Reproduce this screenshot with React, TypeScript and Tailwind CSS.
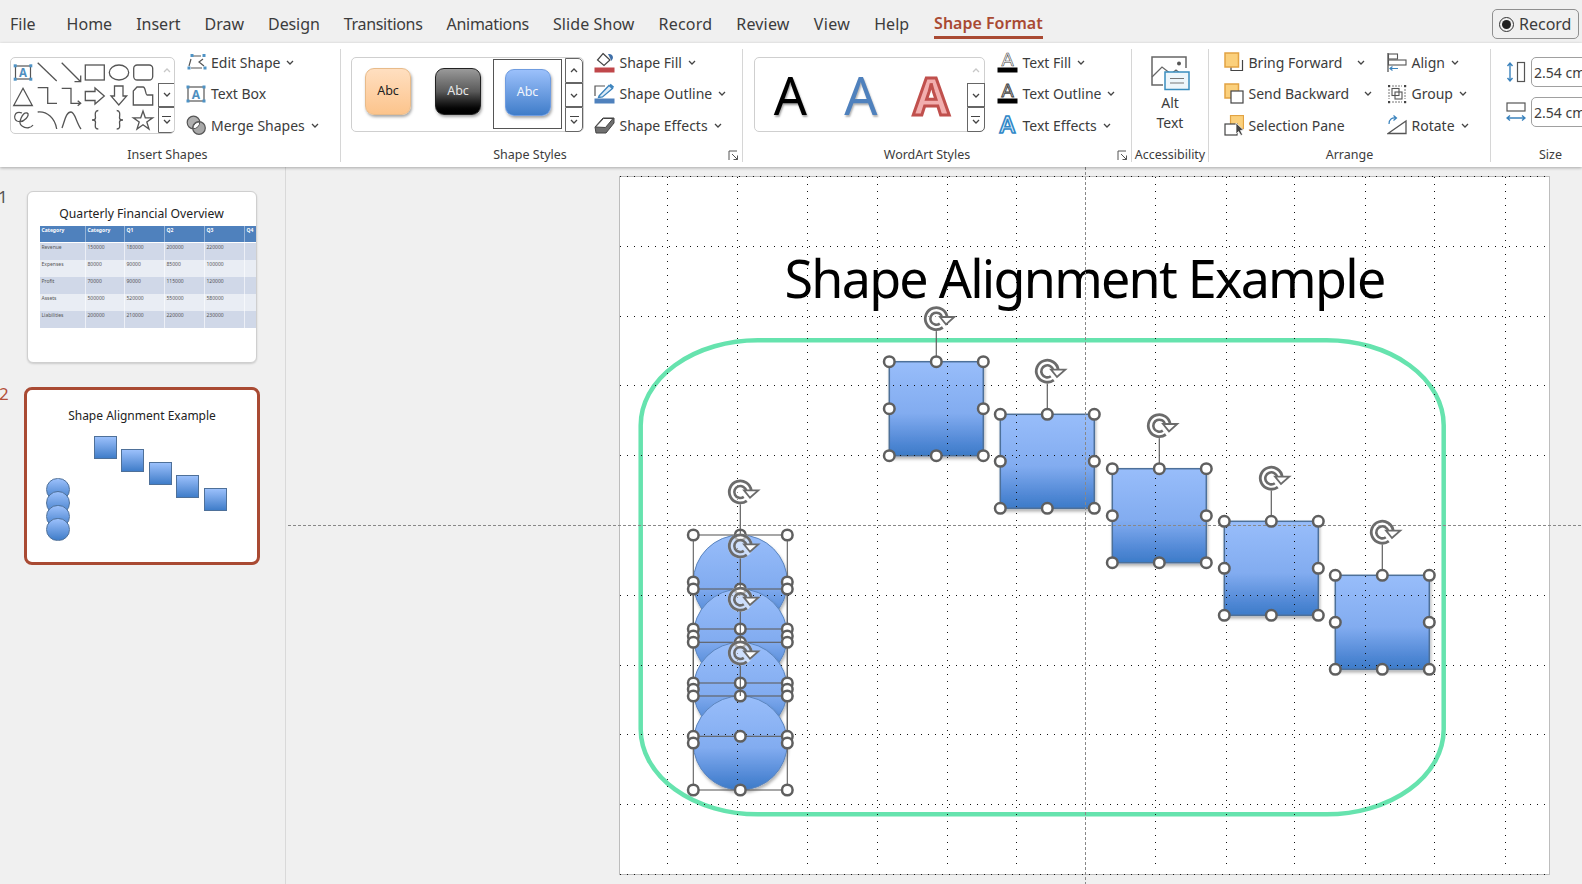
import React from "react";

const ink = "#555555";

function Chevron({ className = "" }: { className?: string }) {
  return (
    <svg width="8" height="5" viewBox="0 0 8 5" className={className} fill="none" stroke="#444" strokeWidth="1.3">
      <path d="M1 1 L4 4 L7 1" />
    </svg>
  );
}

function TextBoxIcon() {
  return (
    <svg width="20" height="18" viewBox="0 0 20 18" className="overflow-visible">
      <rect x="2" y="2" width="16" height="14" fill="#fff" stroke="#555" strokeWidth="1.2" />
      {[[0.5, 0.5], [16.5, 0.5], [0.5, 14.5], [16.5, 14.5]].map(([x, y], i) => (
        <rect key={i} x={x} y={y} width="3" height="3" fill="#4f93c5" />
      ))}
      <text x="10" y="13.5" textAnchor="middle" fontSize="12" fontWeight="700" fill="#4f8fc0" fontFamily="Noto Sans, sans-serif">A</text>
    </svg>
  );
}

function EditShapeIcon() {
  return (
    <svg width="21" height="18" viewBox="0 0 21 18" fill="none">
      <path d="M6 3 L15 3 M17 6 L13 9 L18 13 M16 15 L5 15 M3 13 L5 6" stroke="#555" strokeWidth="1.2" />
      {[[4.5, 1], [16.5, 1], [1.5, 13.5], [17.5, 13.5]].map(([x, y], i) => (
        <rect key={i} x={x} y={y} width="3" height="3" fill="#4f93c5" />
      ))}
    </svg>
  );
}

function MergeIcon() {
  return (
    <svg width="21" height="21" viewBox="0 0 21 21">
      <circle cx="7.5" cy="7.5" r="6.3" fill="#b0b0b0" stroke="#555" strokeWidth="1.2" />
      <circle cx="13" cy="13" r="6.3" fill="#a8a8a8" stroke="#555" strokeWidth="1.2" />
      <path d="M7 13.7 A6.3 6.3 0 0 1 13.7 7 A6.3 6.3 0 0 1 7 13.7" fill="#fff" stroke="#555" strokeWidth="1" />
    </svg>
  );
}

function FillIcon() {
  return (
    <svg width="21" height="21" viewBox="0 0 21 21" fill="none">
      <path d="M9 1.5 L16 8 L10 13.5 L3.5 8 Z" fill="#fff" stroke="#444" strokeWidth="1.2" />
      <path d="M14 2 C17 1.5 19 3 19 6 L17.5 9 L15.5 5 Z" fill="#3f6fa8" />
      <rect x="0.5" y="15.5" width="20" height="5" fill="#c0474a" />
    </svg>
  );
}

function OutlineIcon() {
  return (
    <svg width="21" height="21" viewBox="0 0 21 21" fill="none">
      <path d="M1 13 L1 3 L11 3" stroke="#555" strokeWidth="1.2" />
      <path d="M5 13 L15 2.5 L18.5 5.5 L8.5 14 L4.5 14.5 Z" fill="#dcebf7" stroke="#3b83bd" strokeWidth="1.3" />
      <path d="M16 1.5 L19.5 4.5" stroke="#3b83bd" strokeWidth="2" />
      <rect x="0.5" y="15.5" width="20" height="5" fill="#4f81bd" />
    </svg>
  );
}

function EffectsIcon() {
  return (
    <svg width="21" height="19" viewBox="0 0 21 19">
      <path d="M1 11 L9 2 L20 2 L20 7 L12 17 L2 17 Z" fill="#6f6f6f" stroke="#444" strokeWidth="1" />
      <path d="M1.5 11 L9.5 2.5 L19 2.5 L11.5 11.5 Z" fill="#fff" stroke="#444" strokeWidth="1" />
    </svg>
  );
}

function TextFillIcon({ mode }: { mode: "fill" | "outline" }) {
  return (
    <svg width="21" height="21" viewBox="0 0 21 21" className="overflow-visible">
      <text x="10.5" y="13.5" textAnchor="middle" fontSize="18" fontFamily="Lato, sans-serif" fill="#fff" stroke="#444" strokeWidth={mode === "fill" ? 0.6 : 1}>A</text>
      <rect x="0.5" y="15.5" width="20" height="5" fill="#000" />
    </svg>
  );
}

function TextEffectIcon() {
  return (
    <svg width="21" height="21" viewBox="0 0 21 21" className="overflow-visible">
      <text x="10.5" y="18" textAnchor="middle" fontSize="22" fontWeight="700" fontFamily="Lato, sans-serif" fill="#dff0fb" stroke="#2f87c7" strokeWidth="1.6">A</text>
    </svg>
  );
}

function BringIcon() {
  return (
    <svg width="20" height="21" viewBox="0 0 20 21" fill="none">
      <path d="M12 18.5 H18.5 V8" stroke="#444" strokeWidth="1.2" />
      <path d="M7 15 V18.5 H13" stroke="#444" strokeWidth="1.2" />
      <rect x="1" y="1" width="13.5" height="14" fill="#fbd07c" stroke="#e2a343" strokeWidth="1.5" />
    </svg>
  );
}

function SendIcon() {
  return (
    <svg width="20" height="21" viewBox="0 0 20 21">
      <rect x="1" y="1" width="13.5" height="14" fill="#fbd07c" stroke="#e2a343" strokeWidth="1.5" />
      <rect x="7" y="8" width="12" height="12" fill="#fff" stroke="#444" strokeWidth="1.2" />
    </svg>
  );
}

function PaneIcon() {
  return (
    <svg width="20" height="21" viewBox="0 0 20 21">
      <rect x="6.5" y="0.5" width="13" height="13" fill="#fbd07c" stroke="#e2a343" strokeWidth="1.2" />
      <rect x="1" y="9" width="12" height="11" fill="#fff" stroke="#444" strokeWidth="1.2" />
      <path d="M12 8 L12 19 L14.5 16.5 L17 20.5 L18.5 19.5 L16.5 15.5 L19.5 15 Z" fill="#444" stroke="#fff" strokeWidth="0.7" />
    </svg>
  );
}

function AlignIcon() {
  return (
    <svg width="20" height="21" viewBox="0 0 20 21" fill="none">
      <path d="M1 1 V20" stroke="#555" strokeWidth="1.3" />
      <rect x="1.5" y="2" width="9" height="5" fill="#fff" stroke="#555" strokeWidth="1.1" />
      <rect x="1.5" y="8" width="17.5" height="5" fill="#fff" stroke="#555" strokeWidth="1.1" />
      <path d="M2.5 16.5 H11 M5.5 14.5 L3 16.5 L5.5 18.5" stroke="#3b83bd" strokeWidth="1.2" />
    </svg>
  );
}

function GroupIcon() {
  return (
    <svg width="20" height="20" viewBox="0 0 20 20" fill="none">
      {[[1, 1], [17, 1], [1, 17], [17, 17]].map(([x, y], i) => (
        <rect key={i} x={x} y={y} width="2.2" height="2.2" fill="#444" />
      ))}
      <path d="M2 5 V15 M18 5 V15 M5 2 H15 M5 18 H15" stroke="#777" strokeWidth="1" strokeDasharray="2 1" />
      <rect x="5" y="4.5" width="7" height="7" fill="#fff" stroke="#555" strokeWidth="1.1" />
      <rect x="8" y="8" width="7" height="7" fill="none" stroke="#555" strokeWidth="1.1" />
    </svg>
  );
}

function RotateIcon() {
  return (
    <svg width="20" height="20" viewBox="0 0 20 20" fill="none">
      <path d="M1 18.5 L19 6 V18.5 Z" fill="#fff" stroke="#555" strokeWidth="1.3" />
      <path d="M2 9 C2 4 5 2.5 9 3 M6.5 0.5 L9.5 3 L6.5 5.5" stroke="#3b83bd" strokeWidth="1.2" />
    </svg>
  );
}

function HeightIcon() {
  return (
    <svg width="20" height="22" viewBox="0 0 20 22" fill="none">
      <path d="M4 2 V20 M1.5 5 L4 2 L6.5 5 M1.5 17 L4 20 L6.5 17" stroke="#3b83bd" strokeWidth="1.4" />
      <rect x="11.5" y="1.5" width="7" height="19" stroke="#555" strokeWidth="1.2" />
    </svg>
  );
}

function WidthIcon() {
  return (
    <svg width="20" height="21" viewBox="0 0 20 21" fill="none">
      <rect x="1" y="1" width="18" height="8" stroke="#555" strokeWidth="1.2" />
      <path d="M1 16 H19 M4 13.5 L1 16 L4 18.5 M16 13.5 L19 16 L16 18.5" stroke="#3b83bd" strokeWidth="1.4" />
    </svg>
  );
}

function AltIcon() {
  return (
    <svg width="39" height="35" viewBox="0 0 39 35" fill="none">
      <path d="M12 29 H1 V1 H35 V12" stroke="#666" strokeWidth="1.5" />
      <path d="M1 21 L11 11 L20 18 L25 14 L30 18" stroke="#666" strokeWidth="1.3" />
      <circle cx="28" cy="7.5" r="2" fill="#555" />
      <rect x="14" y="16" width="24" height="17.5" fill="#eef6fb" stroke="#3a8dbe" strokeWidth="1.5" />
      <path d="M19 22.5 H33 M19 27 H33" stroke="#777" strokeWidth="1.2" />
    </svg>
  );
}

function Launcher() {
  return (
    <svg width="11" height="11" viewBox="0 0 11 11" fill="none" stroke="#555" strokeWidth="1">
      <path d="M1 10 V1 H9 M4 4 L9.5 9.5 M9.5 5.5 V9.5 H5.5" />
    </svg>
  );
}

function ScrollCol({ h, firstOff }: { h: [string, string, string]; firstOff?: boolean }) {
  return (
    <div className="w-[18px] flex flex-col shrink-0">
      <div className={`${h[0]} flex items-center justify-center ${firstOff ? "" : "border border-[#666] rounded-tr-[5px]"}`}>
        <svg width="8" height="5" viewBox="0 0 8 5" fill="none" stroke={firstOff ? "#c8c8c8" : "#444"} strokeWidth="1.3"><path d="M1 4 L4 1 L7 4" /></svg>
      </div>
      <div className={`${h[1]} flex items-center justify-center border border-[#666]`}>
        <Chevron />
      </div>
      <div className={`${h[2]} flex flex-col gap-[2px] items-center justify-center border border-[#666] rounded-br-[5px]`}>
        <div className="w-[9px] h-px bg-[#444]" />
        <Chevron />
      </div>
    </div>
  );
}

function Cmd({ icon, label, chevron, chevClass }: { icon: React.ReactNode; label: string; chevron?: boolean; chevClass?: string }) {
  return (
    <div className="h-[28px] flex items-center whitespace-nowrap text-[14px]">
      <div className="w-[21px] h-[21px] flex items-center justify-center shrink-0">{icon}</div>
      <span className="ml-[4.5px]">{label}</span>
      {chevron && <Chevron className={chevClass ?? "ml-[6px]"} />}
    </div>
  );
}

function Col({ className = "", children }: { className?: string; children: React.ReactNode }) {
  return <div className={`flex flex-col gap-[3.5px] -mt-[1px] ${className}`}>{children}</div>;
}

function Group({ className, label, labelClass = "justify-center", launcher, children, inner = "" }: { className: string; label: string; labelClass?: string; launcher?: boolean; children: React.ReactNode; inner?: string }) {
  return (
    <div className={`relative flex flex-col h-[113px] shrink-0 border-r border-[#d6d6d6] ${className}`}>
      <div className={`h-[99px] shrink-0 flex ${inner}`}>{children}</div>
      <div className={`h-[14px] leading-[14px] flex items-center text-[12.5px] whitespace-nowrap ${labelClass}`}>{label}</div>
      {launcher && (
        <div className="absolute right-[3px] bottom-[1px]">
          <Launcher />
        </div>
      )}
    </div>
  );
}

function ShapeGlyphs() {
  const s = { fill: "none", stroke: ink, strokeWidth: 1.3 };
  return (
    <svg width="147" height="77" viewBox="11 58 147 77" className="shrink-0 overflow-visible">
      <rect x="15.5" y="66" width="15" height="13" fill="#fff" stroke="#555" strokeWidth="1.2" />
      {[[13.7, 64.3], [29.3, 64.3], [13.7, 77.7], [29.3, 77.7]].map(([x, y], i) => (
        <rect key={i} x={x} y={y} width="3" height="3" fill="#4f93c5" />
      ))}
      <text x="23" y="77" textAnchor="middle" fontSize="11.5" fontWeight="700" fill="#4f8fc0" fontFamily="Noto Sans, sans-serif">A</text>
      <path d="M37.7 62.7 L56.7 81" {...s} />
      <path d="M61.7 62.7 L80.7 81.7 M80.7 75.5 V81.7 H74.5" {...s} />
      <rect x="85.3" y="65" width="19" height="15" {...s} />
      <ellipse cx="119" cy="72.5" rx="9.7" ry="7.5" {...s} />
      <rect x="133.7" y="65" width="19" height="15" rx="3.5" {...s} />
      <path d="M23 88.3 L32.3 105.5 H13.7 Z" {...s} />
      <path d="M37.7 87.7 H47.7 V103.3 H57" {...s} />
      <path d="M61.7 88.3 H71 V103.3 H80.7 M77.7 100.8 L80.7 103.3 L77.7 105.8" {...s} />
      <path d="M85.3 91.5 H95 V88 L104.3 96 L95 104 V100.5 H85.3 Z" {...s} />
      <path d="M114.5 86 H123 V96 H126.7 L118.8 105 L111 96 H114.5 Z" {...s} />
      <path d="M137 87 H143 C146 87 145 94 147 95 H152.7 V105 H133.3 V91 Z" {...s} />
      <path d="M22 113 C14 110 13 119 17 121 C24 124 31 114 27 113 C23 112 17 123 22 126 C26 129 31 128 33 125" {...s} />
      <path d="M37.7 112 C47 111 55 118 56.7 129" {...s} />
      <path d="M62 128 C65 120 66 112 71 112 C75 112 76 122 81 129" {...s} />
      <path d="M98.3 110.5 C94 110.5 95.5 116 95.5 118 C95.5 120 92 120 92 120 C92 120 95.5 120 95.5 122 C95.5 125 94 129 98.3 129" {...s} />
      <path d="M116.7 110.5 C121 110.5 119.5 116 119.5 118 C119.5 120 123 120 123 120 C123 120 119.5 120 119.5 122 C119.5 125 121 129 116.7 129" {...s} />
      <path d="M143 111 L145.3 117.8 H152.7 L146.8 122 L149 129 L143 124.8 L137 129 L139.2 122 L133.3 117.8 L140.7 117.8 Z" {...s} />
    </svg>
  );
}

function Swatch({ cls, text, textCls }: { cls: string; text: string; textCls: string }) {
  return (
    <div className={`w-[46px] h-[47px] rounded-[9px] border flex items-center justify-center text-[12.5px] shadow-[1px_2px_3px_rgba(0,0,0,0.35)] ${cls} ${textCls}`}>{text}</div>
  );
}

const TABS: [string, string][] = [
  ["Home", ""],
  ["Insert", ""],
  ["Draw", ""],
  ["Design", "tracking-[-0.1px]"],
  ["Transitions", "tracking-[-0.3px]"],
  ["Animations", "tracking-[-0.3px]"],
  ["Slide Show", "tracking-[0.1px]"],
  ["Record", "tracking-[0.2px]"],
  ["Review", "tracking-[0.2px]"],
  ["View", "tracking-[0.4px]"],
  ["Help", ""],
];

function Ribbon() {
  return (
    <div className="relative z-10 h-[124px] bg-white pt-[6px] flex shadow-[0_1px_3px_rgba(0,0,0,0.3)]">
      <Group className="w-[341px] pl-0" label="Insert Shapes" labelClass="pl-[1px] w-[334px] justify-center">
        <div className="ml-[9.5px] mt-[8px] w-[165px] h-[77px] border border-[#cfcfcf] rounded-[5px] flex overflow-hidden">
          <ShapeGlyphs />
          <ScrollCol h={["h-[26px]", "h-[24px]", "h-[27px]"]} firstOff />
        </div>
        <Col className="ml-[11px]">
          <Cmd icon={<EditShapeIcon />} label="Edit Shape" chevron />
          <Cmd icon={<TextBoxIcon />} label="Text Box" />
          <Cmd icon={<MergeIcon />} label="Merge Shapes" chevron />
        </Col>
      </Group>

      <Group className="w-[402px]" label="Shape Styles" labelClass="justify-center pr-[23px]" launcher>
        <div className="ml-[10px] mt-[8px] w-[233px] h-[75px] border border-[#cfcfcf] rounded-[5px] flex items-start">
          <div className="flex flex-1 items-start h-[73px] pl-[13px] pt-[10px]">
            <Swatch cls="border-[#e8bb8a] bg-linear-to-b from-[#ffdfc0] to-[#fcc48c]" text="Abc" textCls="text-[#222]" />
            <div className="w-[24px]" />
            <Swatch cls="border-[#222] bg-linear-to-b from-[#9a9a9a] via-[#5a5a5a] to-[#000]" text="Abc" textCls="text-[#e6e6e6]" />
            <div className="ml-[12px] -mt-[9px] w-[69px] h-[70px] border border-[#555] flex items-start justify-center pt-[9px]">
              <Swatch cls="border-[#6f9ce0] bg-linear-to-b from-[#9bc0fb] to-[#3f7dc9]" text="Abc" textCls="text-[#f2f6fc]" />
            </div>
          </div>
          <ScrollCol h={["h-[25px]", "h-[24px]", "h-[25px]"]} />
        </div>
        <Col className="ml-[10px]">
          <Cmd icon={<FillIcon />} label="Shape Fill" chevron />
          <Cmd icon={<OutlineIcon />} label="Shape Outline" chevron />
          <Cmd icon={<EffectsIcon />} label="Shape Effects" chevron />
        </Col>
      </Group>

      <Group className="w-[389px]" label="WordArt Styles" labelClass="justify-center pr-[20px]" launcher>
        <div className="ml-[11px] mt-[8px] w-[231px] h-[75px] border border-[#cfcfcf] rounded-[5px] flex items-start font-['Lato',sans-serif]">
          <div className="flex flex-1 h-[73px] items-center">
            <div className="w-[70.5px] text-center text-[52px] leading-none text-black [text-shadow:1px_2px_2px_rgba(0,0,0,0.35)]">A</div>
            <div className="w-[70.5px] text-center text-[52px] leading-none text-[#4f81bd] [text-shadow:1px_2px_2px_rgba(0,0,0,0.3)]">A</div>
            <div className="w-[70.5px] text-center text-[52px] leading-none font-bold text-[#f2aeae] [-webkit-text-stroke:3px_#c0504d]">A</div>
          </div>
          <ScrollCol h={["h-[25px]", "h-[24px]", "h-[25px]"]} firstOff />
        </div>
        <Col className="ml-[12px]">
          <Cmd icon={<TextFillIcon mode="fill" />} label="Text Fill" chevron />
          <Cmd icon={<TextFillIcon mode="outline" />} label="Text Outline" chevron />
          <Cmd icon={<TextEffectIcon />} label="Text Effects" chevron />
        </Col>
      </Group>

      <Group className="w-[77px]" label="Accessibility" inner="justify-center">
        <div className="flex flex-col items-center mt-[7px] text-[14px] leading-[20px]">
          <AltIcon />
          <div className="mt-[2px]">Alt</div>
          <div>Text</div>
        </div>
      </Group>

      <Group className="w-[282px]" label="Arrange">
        <Col className="ml-[14px] w-[163px]">
          <Cmd icon={<BringIcon />} label="Bring Forward" chevron chevClass="ml-[15px]" />
          <Cmd icon={<SendIcon />} label="Send Backward" chevron chevClass="ml-[15px]" />
          <Cmd icon={<PaneIcon />} label="Selection Pane" />
        </Col>
        <Col>
          <Cmd icon={<AlignIcon />} label="Align" chevron />
          <Cmd icon={<GroupIcon />} label="Group" chevron />
          <Cmd icon={<RotateIcon />} label="Rotate" chevron />
        </Col>
      </Group>

      <div className="flex-1 flex flex-col h-[113px] relative overflow-hidden">
        <div className="h-[99px] shrink-0 flex flex-col gap-[10px] pt-[8px] pl-[15px]">
          {[<HeightIcon key="h" />, <WidthIcon key="w" />].map((ic, i) => (
            <div key={i} className="flex items-center gap-[5px] w-[200px]">
              <div className="w-[20px] shrink-0 flex justify-center">{ic}</div>
              <div className="w-[90px] h-[30px] border border-[#a0a0a0] rounded-[5px] flex items-center pl-[2px] text-[14px] whitespace-nowrap">2.54 cm</div>
            </div>
          ))}
        </div>
        <div className="h-[14px] leading-[14px] flex items-center justify-center pl-[28px] text-[12.5px]">Size</div>
      </div>
    </div>
  );
}

function Thumb1() {
  const rows = [
    ["Revenue", "150000", "180000", "200000", "220000", ""],
    ["Expenses", "80000", "90000", "85000", "100000", ""],
    ["Profit", "70000", "90000", "115000", "120000", ""],
    ["Assets", "500000", "520000", "550000", "580000", ""],
    ["Liabilities", "200000", "210000", "220000", "230000", ""],
  ];
  const head = ["Category", "Category", "Q1", "Q2", "Q3", "Q4"];
  return (
    <div className="w-[230px] h-[172px] bg-white border border-[#cfcfcf] rounded-[6px] shadow-[0_1px_2px_rgba(0,0,0,0.15)] overflow-hidden font-['Lato',sans-serif]">
      <div className="h-[34px] pt-[11px] text-center text-[12.2px] leading-[22px] text-[#222] pr-[1px]">Quarterly Financial Overview</div>
      <div className="ml-[11.5px] w-[260px] text-[5px] leading-[6px]">
        <div className="grid grid-cols-[46px_39px_40px_40px_40px_55px] h-[17px] bg-[#4f81bd] border-b border-white text-white font-bold">
          {head.map((h, i) => (
            <div key={i} className="pl-[2px] pt-[1px] border-r border-white/40">{h}</div>
          ))}
        </div>
        {rows.map((r, ri) => (
          <div key={ri} className={`grid grid-cols-[46px_39px_40px_40px_40px_55px] h-[17px] text-[#555] ${ri % 2 === 0 ? "bg-[#d0d8e8]" : "bg-[#e9edf4]"}`}>
            {r.map((c, i) => (
              <div key={i} className="pl-[2px] pt-[1px] border-r border-white/60">{c}</div>
            ))}
          </div>
        ))}
      </div>
    </div>
  );
}

function Thumb2() {
  const sq = [
    [69.3, 48.5],
    [96.3, 61.8],
    [124.3, 74.8],
    [151.3, 87.8],
    [179.3, 100.8],
  ];
  const ci = [90.8, 104.2, 117.8, 130.8];
  return (
    <div className="relative w-[236px] h-[178px] bg-white border-[3px] border-[#a94a33] rounded-[8px] overflow-hidden font-['Lato',sans-serif]">
      <div className="pt-[16px] text-center text-[12px] leading-[20px] text-[#222]">Shape Alignment Example</div>
      {sq.map(([l, t], i) => (
        <div
          key={i}
          className="absolute w-[23.5px] h-[23.5px] bg-linear-to-b from-[#9bc0fb] to-[#3f7dc9] border border-[#4e7099]"
          style={{ left: l - 2.5, top: t - 3 }}
        />
      ))}
      {ci.map((t, i) => (
        <div
          key={i}
          className="absolute left-[19px] w-[23.5px] h-[23.5px] rounded-full bg-linear-to-b from-[#9bc0fb] to-[#3f7dc9] border border-[#4e7099]"
          style={{ top: t - 3 }}
        />
      ))}
    </div>
  );
}

function Sidebar() {
  return (
    <div className="w-[286px] h-full shrink-0 border-r border-[#d9d9d9] pt-[24px] overflow-hidden">
      <div className="flex">
        <div className="w-[27px] text-[17px] leading-[12px] pt-[0px] text-[#555] -ml-[2px] mr-[2px]">1</div>
        <Thumb1 />
      </div>
      <div className="flex mt-[24px]">
        <div className="w-[24px] text-[17px] leading-[14px] text-[#b4503a] -ml-[1px] mr-[1px]">2</div>
        <Thumb2 />
      </div>
    </div>
  );
}

const SIZE = 94;
const SQUARES = [
  [889.3, 361.7],
  [1000.3, 414.3],
  [1112.3, 468.7],
  [1224.3, 521.3],
  [1335.3, 575.3],
];
const CIRCLES = [
  [693.3, 535],
  [693.3, 589],
  [693.3, 642.3],
  [693.3, 696],
];
const VX = [667, 737, 807, 877, 947, 1016, 1155, 1226, 1294, 1365, 1434, 1505];
const HY = [176, 246, 316, 385, 455, 595, 665, 734, 804, 874];

function Handles({ x, y }: { x: number; y: number }) {
  const pts = [
    [x, y],
    [x + SIZE / 2, y],
    [x + SIZE, y],
    [x, y + SIZE / 2],
    [x + SIZE, y + SIZE / 2],
    [x, y + SIZE],
    [x + SIZE / 2, y + SIZE],
    [x + SIZE, y + SIZE],
  ];
  return (
    <g>
      {pts.map(([a, b], i) => (
        <circle key={i} cx={a} cy={b} r="5.3" fill="#fff" stroke="#5f5f5f" strokeWidth="2.5" />
      ))}
    </g>
  );
}

function Rot({ x, y }: { x: number; y: number }) {
  const cx = x + SIZE / 2;
  const cy = y - 43;
  return (
    <g>
      <line x1={cx} x2={cx} y1={y} y2={cy + 12} stroke="#5f5f5f" strokeWidth="1.2" />
      <g transform={`translate(${cx} ${cy})`}>
        <circle r="12.5" fill="#fff" opacity="0.55" />
        <path d="M 6.5 8.8 A 11 11 0 1 1 10.9 -1.5" fill="none" stroke="#6b6b6b" strokeWidth="2.8" />
        <path d="M 3.5 4.9 A 6 6 0 1 1 5.9 -1.2" fill="none" stroke="#6b6b6b" strokeWidth="2.6" />
        <polygon points="3.7,-1.7 18,-1.7 9.7,5.7" fill="#fff" stroke="#6b6b6b" strokeWidth="1.8" />
      </g>
    </g>
  );
}

function CanvasArt() {
  return (
    <svg className="absolute inset-0" width="1296" height="717" viewBox="286 167 1296 717">
      <defs>
        <linearGradient id="blue" x1="0" y1="0" x2="0" y2="1">
          <stop offset="0" stopColor="#98bdfa" />
          <stop offset="0.55" stopColor="#82acf0" />
          <stop offset="0.85" stopColor="#5289d6" />
          <stop offset="1" stopColor="#3c7bc8" />
        </linearGradient>
        <filter id="sh" x="-10%" y="-10%" width="120%" height="120%">
          <feDropShadow dx="1" dy="2.5" stdDeviation="1.8" floodColor="#000" floodOpacity="0.3" />
        </filter>
      </defs>
      <rect x="640.7" y="340.3" width="803" height="474" rx="117" ry="85" fill="none" stroke="#66e3ae" strokeWidth="4.5" />
      {CIRCLES.map(([x, y], i) => (
        <circle key={i} cx={x + SIZE / 2} cy={y + SIZE / 2} r={SIZE / 2} fill="url(#blue)" stroke="#5a84bd" strokeWidth="1" filter="url(#sh)" />
      ))}
      {SQUARES.map(([x, y], i) => (
        <rect key={i} x={x} y={y} width={SIZE} height={SIZE} fill="url(#blue)" stroke="#4e7099" strokeWidth="1.5" filter="url(#sh)" />
      ))}
      {VX.map((x) => (
        <line key={x} x1={x + 0.5} x2={x + 0.5} y1="177" y2="870" stroke="#111" strokeWidth="1" strokeDasharray="1 6" shapeRendering="crispEdges" />
      ))}
      {HY.map((y) => (
        <line key={y} x1="620" x2="1546" y1={y + 0.5} y2={y + 0.5} stroke="#111" strokeWidth="1" strokeDasharray="1 6" shapeRendering="crispEdges" />
      ))}
      <line x1="1085.5" x2="1085.5" y1="167" y2="884" stroke="#888" strokeWidth="1" strokeDasharray="3 2" shapeRendering="crispEdges" />
      <line x1="288" x2="1582" y1="525.5" y2="525.5" stroke="#888" strokeWidth="1" strokeDasharray="3 2" shapeRendering="crispEdges" />
      {CIRCLES.map(([x, y], i) => (
        <rect key={i} x={x} y={y} width={SIZE} height={SIZE} fill="none" stroke="#5f5f5f" strokeWidth="1.1" />
      ))}
      {CIRCLES.map(([x, y], i) => (
        <Handles key={i} x={x} y={y} />
      ))}
      {CIRCLES.map(([x, y], i) => (
        <Rot key={i} x={x} y={y} />
      ))}
      {SQUARES.map(([x, y], i) => (
        <g key={i}>
          <Rot x={x} y={y} />
          <Handles x={x} y={y} />
        </g>
      ))}
    </svg>
  );
}

export default function App() {
  return (
    <div className="w-[1582px] h-[884px] overflow-hidden bg-[#f0f0f0] text-[#3c3c3c] font-['Noto_Sans',sans-serif] flex flex-col">
      <div className="h-[43px] flex items-start pl-[10px] text-[16px] gap-[24px] relative">
        <div className="h-[30px] mt-[9px] flex items-center mr-[7px]">File</div>
        {TABS.map(([t, c]) => (
          <div key={t} className={`h-[30px] mt-[9px] flex items-center whitespace-nowrap ${c}`}>{t}</div>
        ))}
        <div className="h-[30px] mt-[9px] ml-[1px] flex items-center border-b-[3px] border-[#a94a33] text-[#a94a33] font-semibold whitespace-nowrap">Shape Format</div>
        <div className="ml-auto mr-[3px] mt-[9px] w-[87px] h-[30px] border border-[#8f8f8f] rounded-[5px] flex items-center pl-[6px] gap-[5px]">
          <div className="w-[15px] h-[15px] rounded-full border border-[#333] flex items-center justify-center">
            <div className="w-[9px] h-[9px] rounded-full bg-[#222]" />
          </div>
          <span>Record</span>
        </div>
      </div>
      <Ribbon />
      <div className="flex-1 flex min-h-0">
        <Sidebar />
        <div className="relative flex-1 overflow-hidden pt-[9px] pl-[333px]">
          <div className="w-[931px] h-[699px] bg-white border border-[#bdbdbd] font-['Lato',sans-serif] text-black text-center">
            <div className="pt-[65px] text-[52px] leading-[72px] tracking-[-1.75px] whitespace-nowrap">Shape Alignment Example</div>
          </div>
          <CanvasArt />
        </div>
      </div>
    </div>
  );
}
